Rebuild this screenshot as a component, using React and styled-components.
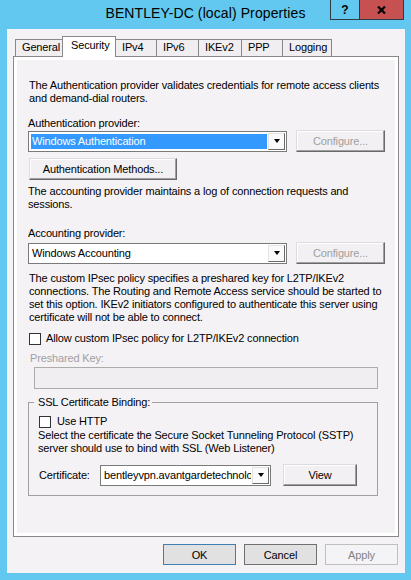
import React from "react";
import styled, { createGlobalStyle } from "styled-components";

const Global = createGlobalStyle`
  html, body {
    margin: 0;
    padding: 0;
    background: #62c8ef;
  }
  body {
    font-family: "Liberation Sans", Arial, sans-serif;
    font-size: 11px;
    letter-spacing: -0.15px;
    color: #000;
  }
`;

const Window = styled.div`
  width: 411px;
  height: 580px;
  background: #62c8ef;
  display: flex;
  flex-direction: column;
`;

const TitleBar = styled.div`
  height: 29px;
  display: grid;
  grid-template-columns: 1fr auto 1fr;
  align-items: start;
`;

const Title = styled.div`
  grid-column: 2;
  font-size: 14px;
  line-height: 27px;
  letter-spacing: 0.1px;
  white-space: nowrap;
`;

const Controls = styled.div`
  grid-column: 3;
  justify-self: end;
  display: flex;
  margin-right: 7px;
  border: 1px solid #2d3b42;
  border-top: none;
`;

const CtlButton = styled.div`
  width: ${(p) => p.$w}px;
  height: 19px;
  display: flex;
  align-items: center;
  justify-content: center;
  background: ${(p) => (p.$close ? "#c75050" : "transparent")};
  font-weight: bold;
  font-size: 12px;
  letter-spacing: 0;
  & + & {
    border-left: 1px solid #2d3b42;
  }
`;

const Client = styled.div`
  flex: 1;
  margin: 0 6px 7px 7px;
  background: #f5f2f6;
  display: flex;
  flex-direction: column;
  padding: 7px 6px 8px 6px;
`;

const TabRow = styled.div`
  display: flex;
  align-items: flex-end;
  height: 21px;
  margin: 0 0 -1px 2px;
  position: relative;
  z-index: 1;
`;

const Tab = styled.div`
  box-sizing: border-box;
  width: ${(p) => p.$w}px;
  height: ${(p) => (p.$active ? 21 : 17)}px;
  margin-bottom: ${(p) => (p.$active ? 0 : 1)}px;
  margin-left: -1px;
  border: 1px solid #898989;
  border-bottom: none;
  background: ${(p) => (p.$active ? "#fff" : "#f0eef1")};
  padding: ${(p) => (p.$active ? "2px 0 0 8px" : "1px 0 0 6px")};
  line-height: 13px;
  white-space: nowrap;
  &:first-child {
    margin-left: 0;
  }
`;

const Panel = styled.div`
  flex: 1;
  border: 1px solid #898989;
  box-shadow: inset 0 0 0 3px #fff;
  padding: 22px 14px 0 14px;
  display: flex;
  flex-direction: column;
  align-items: flex-start;
`;

const Desc = styled.div`
  line-height: 13px;
  white-space: nowrap;
  margin-top: ${(p) => p.$mt || 0}px;
  margin-left: ${(p) => p.$ml || 0}px;
`;

const FieldLabel = styled.div`
  line-height: 13px;
  white-space: nowrap;
  margin-top: ${(p) => p.$mt || 0}px;
  margin-left: ${(p) => p.$ml || 0}px;
  color: ${(p) => (p.$disabled ? "#a0a0a0" : "#000")};
  width: ${(p) => (p.$w ? `${p.$w}px` : "auto")};
  flex-shrink: 0;
`;

const Row = styled.div`
  display: flex;
  align-items: center;
  margin-top: ${(p) => p.$mt || 0}px;
  gap: ${(p) => p.$gap || 0}px;
`;

const Combo = styled.div`
  box-sizing: border-box;
  width: ${(p) => p.$w}px;
  height: 21px;
  display: flex;
  background: #fff;
  border: 1px solid #7a7a7a;
  padding: 1px;
`;

const ComboValue = styled.div`
  flex: 1;
  min-width: 0;
  margin: 1px;
  padding-left: 1px;
  line-height: 15px;
  white-space: nowrap;
  overflow: hidden;
  background: ${(p) => (p.$selected ? "#3399ff" : "transparent")};
  color: ${(p) => (p.$selected ? "#fff" : "#000")};
`;

const ComboArrow = styled.div`
  width: 17px;
  flex-shrink: 0;
  box-sizing: border-box;
  border: 1px solid;
  border-color: #e3e3e3 #696969 #696969 #e3e3e3;
  background: #fafafa;
  display: flex;
  align-items: center;
  justify-content: center;
  &::after {
    content: "";
    border-left: 3.5px solid transparent;
    border-right: 3.5px solid transparent;
    border-top: 4px solid #000;
  }
`;

const PushButton = styled.button`
  box-sizing: border-box;
  width: ${(p) => p.$w}px;
  height: 22px;
  margin: 0;
  margin-left: ${(p) => p.$ml || 0}px;
  padding: 0;
  font: inherit;
  letter-spacing: inherit;
  background: #f2f0f3;
  border: 1px solid;
  border-color: #dcdcdc #696969 #696969 #dcdcdc;
  box-shadow: inset -1px -1px #a0a0a0, inset 1px 1px #fff;
  color: ${(p) => (p.$disabled ? "#a0a0a0" : "#000")};
  flex-shrink: 0;
`;

const CheckBox = styled.span`
  box-sizing: border-box;
  width: 12px;
  height: 12px;
  margin-left: 1px;
  border: 1px solid #333;
  background: #fff;
  flex-shrink: 0;
`;

const TextBox = styled.div`
  box-sizing: border-box;
  width: 344px;
  height: 22px;
  margin: 2px 0 0 6px;
  border: 1px solid #acacac;
  background: #f0eef1;
`;

const Group = styled.fieldset`
  box-sizing: border-box;
  width: 350px;
  margin: 7px 0 0 0;
  padding: 6px 9px 9px 9px;
  border: 1px solid #a0a0a0;
  min-inline-size: 0;
`;

const Legend = styled.legend`
  margin-left: -4px;
  padding: 0 2px 0 4px;
  line-height: 13px;
`;

const ButtonRow = styled.div`
  display: flex;
  justify-content: flex-end;
  gap: 8px;
  margin: 7px 1px 0 0;
`;

const DialogButton = styled.button`
  box-sizing: border-box;
  width: 73px;
  height: 21px;
  margin: 0;
  padding: 0;
  font: inherit;
  letter-spacing: inherit;
  background: ${(p) => (p.$disabled ? "#f4f3f5" : "#e1e1e1")};
  border: 1px solid
    ${(p) => (p.$default ? "#3c7fb1" : p.$disabled ? "#bfbfbf" : "#707070")};
  color: ${(p) => (p.$disabled ? "#838383" : "#000")};
`;

const tabs = [
  { name: "General", w: 48 },
  { name: "Security", w: 54, active: true },
  { name: "IPv4", w: 42 },
  { name: "IPv6", w: 43 },
  { name: "IKEv2", w: 44 },
  { name: "PPP", w: 42 },
  { name: "Logging", w: 50 },
];

const CloseGlyph = () => (
  <svg width="9" height="8" viewBox="0 0 9 8">
    <path d="M1 0.5 L8 7.5 M8 0.5 L1 7.5" stroke="#000" strokeWidth="2.2" />
  </svg>
);

export default function App() {
  return (
    <Window>
      <Global />
      <TitleBar>
        <Title>BENTLEY-DC (local) Properties</Title>
        <Controls>
          <CtlButton $w={28}>?</CtlButton>
          <CtlButton $w={43} $close>
            <CloseGlyph />
          </CtlButton>
        </Controls>
      </TitleBar>
      <Client>
        <TabRow>
          {tabs.map((t) => (
            <Tab key={t.name} $w={t.w} $active={t.active}>
              {t.name}
            </Tab>
          ))}
        </TabRow>
        <Panel>
          <Desc $ml={1}>
            The Authentication provider validates credentials for remote access clients
            <br />
            and demand-dial routers.
          </Desc>
          <FieldLabel $mt={12}>Authentication provider:</FieldLabel>
          <Row $mt={0} $gap={9}>
            <Combo $w={259}>
              <ComboValue $selected>Windows Authentication</ComboValue>
              <ComboArrow />
            </Combo>
            <PushButton $w={89} $disabled>
              Configure...
            </PushButton>
          </Row>
          <PushButton $w={148} $ml={1} style={{ marginTop: 6 }}>
            Authentication Methods...
          </PushButton>
          <Desc $mt={5}>
            The accounting provider maintains a log of connection requests and
            <br />
            sessions.
          </Desc>
          <FieldLabel $mt={16}>Accounting provider:</FieldLabel>
          <Row $mt={2} $gap={9}>
            <Combo $w={259}>
              <ComboValue>Windows Accounting</ComboValue>
              <ComboArrow />
            </Combo>
            <PushButton $w={89} $disabled>
              Configure...
            </PushButton>
          </Row>
          <Desc $mt={8} $ml={1}>
            The custom IPsec policy specifies a preshared key for L2TP/IKEv2
            <br />
            connections. The Routing and Remote Access service should be started to
            <br />
            set this option. IKEv2 initiators configured to authenticate this server using
            <br />
            certificate will not be able to connect.
          </Desc>
          <Row $mt={8} $gap={5}>
            <CheckBox />
            <FieldLabel>Allow custom IPsec policy for L2TP/IKEv2 connection</FieldLabel>
          </Row>
          <FieldLabel $mt={7} $ml={2} $disabled>
            Preshared Key:
          </FieldLabel>
          <TextBox />
          <Group>
            <Legend>SSL Certificate Binding:</Legend>
            <Row $gap={6}>
              <CheckBox />
              <FieldLabel>Use HTTP</FieldLabel>
            </Row>
            <Desc $mt={1}>
              Select the certificate the Secure Socket Tunneling Protocol (SSTP)
              <br />
              server should use to bind with SSL (Web Listener)
            </Desc>
            <Row $mt={9}>
              <FieldLabel $w={61} $ml={1}>
                Certificate:
              </FieldLabel>
              <Combo $w={171}>
                <ComboValue>bentleyvpn.avantgardetechnologies.com</ComboValue>
                <ComboArrow />
              </Combo>
              <PushButton $w={74} $ml={12}>
                View
              </PushButton>
            </Row>
          </Group>
        </Panel>
        <ButtonRow>
          <DialogButton $default>OK</DialogButton>
          <DialogButton>Cancel</DialogButton>
          <DialogButton $disabled>Apply</DialogButton>
        </ButtonRow>
      </Client>
    </Window>
  );
}
